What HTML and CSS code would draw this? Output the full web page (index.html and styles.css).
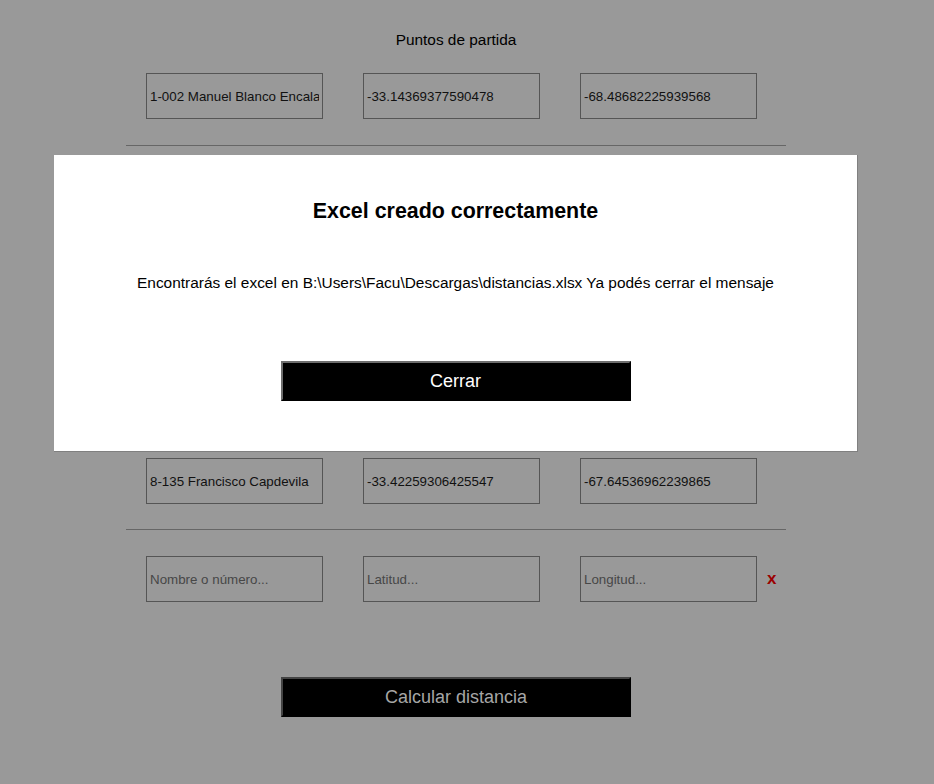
FILE: index.html
```html
<!DOCTYPE html>
<html lang="es">
<head>
<meta charset="utf-8">
<title>Distancias</title>
<link rel="stylesheet" href="styles.css">
</head>
<body>
<main class="page">
  <h2 class="section-title">Puntos de partida</h2>
  <div class="row">
    <div class="fields">
      <input class="field" type="text" value="1-002 Manuel Blanco Encalada">
      <input class="field" type="text" value="-33.14369377590478">
      <input class="field" type="text" value="-68.48682225939568">
    </div>
  </div>
  <hr class="divider">
  <div class="hidden-block">
    <h2 class="section-title">Puntos de llegada</h2>
  </div>
  <div class="row">
    <div class="fields">
      <input class="field" type="text" value="8-135 Francisco Capdevila">
      <input class="field" type="text" value="-33.42259306425547">
      <input class="field" type="text" value="-67.64536962239865">
    </div>
  </div>
  <hr class="divider">
  <div class="row">
    <div class="fields">
      <input class="field" type="text" placeholder="Nombre o número...">
      <input class="field" type="text" placeholder="Latitud...">
      <input class="field" type="text" placeholder="Longitud...">
    </div>
    <span class="remove">x</span>
  </div>
  <button class="btn btn-calc" type="button">Calcular distancia</button>
</main>

<div class="modal">
  <h1 class="modal-title">Excel creado correctamente</h1>
  <p class="modal-text">Encontrarás el excel en B:\Users\Facu\Descargas\distancias.xlsx Ya podés cerrar el mensaje</p>
  <button class="btn btn-close" type="button">Cerrar</button>
</div>
</body>
</html>
```
FILE: styles.css
```css
html, body {
  margin: 0;
  padding: 0;
}
body {
  background: #999999;
  font-family: "Liberation Sans", Arial, sans-serif;
  color: #000;
  width: 934px;
  height: 784px;
  overflow: hidden;
}
.page {
  width: 912px;
  display: flex;
  flex-direction: column;
  align-items: center;
  padding-top: 31px;
}
.section-title {
  margin: 0;
  font-size: 15.4px;
  font-weight: normal;
  line-height: 18px;
  color: #000;
}
.row {
  width: 660px;
  box-sizing: border-box;
  padding-left: 20px;
  display: flex;
  align-items: center;
  margin-top: 24px;
}
.fields {
  display: flex;
  gap: 40px;
}
.field {
  width: 177px;
  height: 46px;
  box-sizing: border-box;
  border: 1px solid #555;
  background: #999999;
  font-family: "Liberation Sans", Arial, sans-serif;
  font-size: 13.333px;
  color: #111;
  padding: 0 3px;
  margin: 0;
  outline: none;
}
.field::placeholder {
  color: #474747;
}
.divider {
  width: 660px;
  margin: 26px 0 0;
  border: 0;
  border-top: 1px solid #666;
  height: 0;
}
.divider + .row {
  margin-top: 26px;
}
.hidden-block {
  height: 288px;
  display: flex;
  align-items: center;
  justify-content: center;
  visibility: hidden;
}
.hidden-block + .row {
  margin-top: 24px;
}
.hidden-block + .row + .divider {
  margin-top: 25px;
}
.remove {
  margin-left: 10px;
  color: #9b0000;
  font-weight: bold;
  font-size: 17px;
  line-height: 17px;
  position: relative;
  top: -1px;
}
.btn {
  width: 350px;
  height: 40px;
  box-sizing: border-box;
  background: #000;
  border: 2px solid #000;
  font-family: "Liberation Sans", Arial, sans-serif;
  font-size: 18px;
  padding: 0;
  cursor: pointer;
}
.btn-calc {
  margin-top: 75px;
  color: #a6a6a6;
  border-top-color: #444;
  border-left-color: #444;
}
.modal {
  position: absolute;
  left: 54px;
  top: 155px;
  width: 804px;
  height: 297px;
  box-sizing: border-box;
  background: #fff;
  border-right: 1px solid #808080;
  border-bottom: 1px solid #808080;
  display: flex;
  flex-direction: column;
  align-items: center;
}
.modal-title {
  margin: 43px 0 0;
  font-size: 21.4px;
  line-height: 26px;
  font-weight: bold;
  color: #000;
}
.modal-text {
  margin: 50px 0 0;
  font-size: 15.45px;
  line-height: 18px;
  color: #000;
}
.btn-close {
  margin-top: 69px;
  color: #fff;
  border-top-color: #6e6e6e;
  border-left-color: #6e6e6e;
}
```
